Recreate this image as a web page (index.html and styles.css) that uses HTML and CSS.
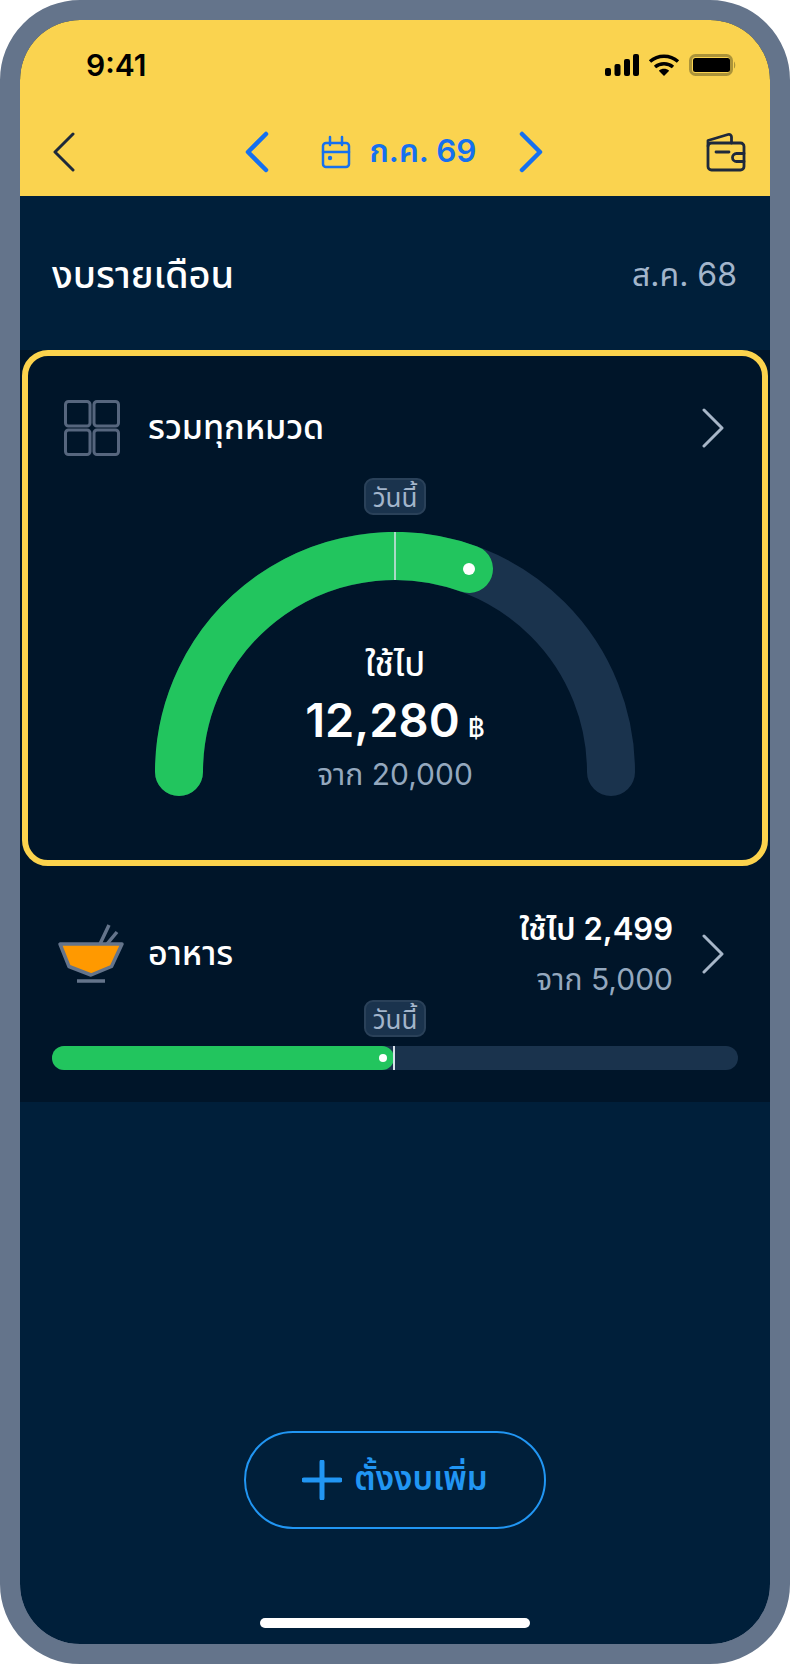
FILE: index.html
```html
<!DOCTYPE html>
<html lang="th">
<head>
<meta charset="utf-8">
<title>งบรายเดือน</title>
<link rel="stylesheet" href="styles.css">
</head>
<body>
<div class="frame">
  <div class="screen">
    <header class="top">
      <div class="status">
        <span class="time">9:41</span>
        <div class="status-icons">
          <svg class="i-signal" viewBox="0 0 34 22"><rect x="0" y="14" width="6" height="8" rx="2"/><rect x="9.5" y="10" width="6" height="12" rx="2"/><rect x="19" y="5" width="6" height="17" rx="2"/><rect x="28" y="0" width="6" height="22" rx="2"/></svg>
          <svg class="i-wifi" viewBox="0 0 32 22"><path class="wf" d="M2 7.500C10 .5 22 .5 30 7.500M7 13C12 8.800 20 8.800 25 13" /><path d="M10.800 16.800C14 14.200 18 14.200 21.200 16.800L16 22Z"/></svg>
          <svg class="i-batt" viewBox="0 0 47 22"><rect class="b-out" x="1.500" y="1.500" width="41" height="19" rx="5"/><rect x="4" y="4" width="37" height="14" rx="2.500"/><path class="b-cap" d="M45 7.500C46.500 8.500 46.800 13.500 45 14.500Z"/></svg>
        </div>
      </div>
      <nav class="nav">
        <svg class="i-back" viewBox="0 0 22 40"><path d="M20 2 2 20l18 18"/></svg>
        <div class="month">
          <svg class="i-step" viewBox="0 0 24 42"><path d="M21 3 3 21l18 18"/></svg>
          <div class="month-label">
            <svg class="i-cal" viewBox="0 0 30 34"><rect x="2" y="8" width="26" height="24" rx="3"/><path d="M2 17h26M9 2v8M21 2v8"/><circle class="cal-dot" cx="9" cy="23" r="2.200"/></svg>
            <span>ก.ค. 69</span>
          </div>
          <svg class="i-step" viewBox="0 0 24 42"><path d="M3 3l18 18L3 39"/></svg>
        </div>
        <svg class="i-wallet" viewBox="0 0 40 40"><rect x="2" y="11" width="36" height="27" rx="3.500"/><path d="M2 14V8.500L22 2.500C24 2 25.500 3 25.500 5V11M10 20h13M38 21.500H30.500a4 4 0 0 0 0 8H38"/></svg>
      </nav>
    </header>

    <div class="page-head">
      <h1 class="page-title">งบรายเดือน</h1>
      <span class="page-period">ส.ค. 68</span>
    </div>

    <div class="panel">
      <section class="card">
        <div class="card-head">
          <svg class="i-grid" viewBox="0 0 56 56"><rect x="1.500" y="1.500" width="24.500" height="24.500" rx="3"/><rect x="30" y="1.500" width="24.500" height="24.500" rx="3"/><rect x="1.500" y="30" width="24.500" height="24.500" rx="3"/><rect x="30" y="30" width="24.500" height="24.500" rx="3"/></svg>
          <h2 class="cat-name">รวมทุกหมวด</h2>
          <svg class="i-next" viewBox="0 0 22 40"><path d="M2 2l18 18L2 38"/></svg>
        </div>
        <div class="today today-gauge">วันนี้</div>
        <div class="gauge">
          <svg class="gauge-svg" viewBox="0 0 480 264">
            <path class="g-track" d="M24 240A216 216 0 0 1 456 240"/>
            <path class="g-fill" d="M24 240A216 216 0 0 1 314 37"/>
            <path class="g-mark" d="M240 0V48"/>
            <circle class="g-dot" cx="314" cy="37" r="6"/>
          </svg>
          <div class="gauge-text">
            <div class="g-label">ใช้ไป</div>
            <div class="g-amount">12,280<span class="g-unit">฿</span></div>
            <div class="g-of">จาก 20,000</div>
          </div>
        </div>
      </section>

      <section class="item">
        <div class="item-row">
          <svg class="i-bowl" viewBox="0 0 72 60">
            <path class="b-sticks" d="M48 20 57 1M55 20 65 8M25 57H53"/>
            <path class="b-bowl" d="M8 20H70L59.500 42.500 39 51 17 42.500Z"/>
          </svg>
          <h2 class="cat-name">อาหาร</h2>
          <div class="item-nums">
            <div class="n-used">ใช้ไป 2,499</div>
            <div class="n-of">จาก 5,000</div>
          </div>
          <svg class="i-next" viewBox="0 0 22 40"><path d="M2 2l18 18L2 38"/></svg>
        </div>
        <div class="bar">
          <div class="today today-bar">วันนี้</div>
          <div class="bar-fill" style="width:49.800%"><span class="bar-dot"></span></div>
          <span class="bar-mark"></span>
        </div>
      </section>
    </div>

    <button class="add" type="button">
      <svg class="i-plus" viewBox="0 0 40 40"><path d="M20 2V38M2 20H38"/></svg>
      <span>ตั้งงบเพิ่ม</span>
    </button>
    <div class="home"></div>
  </div>
</div>
</body>
</html>
```

FILE: styles.css
```css
* { box-sizing: border-box; }
html, body { margin: 0; padding: 0; background: #fff; }
body { font-family: "Inter", "Noto Sans", "Noto Sans Thai", sans-serif; }
svg { display: block; flex: none; }
h1, h2 { margin: 0; font-weight: 500; }

.frame { width: 790px; height: 1664px; border: 20px solid #64748b; border-radius: 80px; overflow: hidden; background: #64748b; }
.screen { width: 750px; height: 1624px; border-radius: 60px; overflow: hidden; background: #001f3a; display: flex; flex-direction: column; }

.top { background: #fad34f; height: 176px; flex: none; }
.status { height: 88px; padding: 2px 34px 0 66px; display: flex; align-items: center; justify-content: space-between; }
.time { font-size: 30px; font-weight: 600; color: #000; }
.status-icons { display: flex; align-items: center; gap: 9px; }
.i-signal { width: 34px; height: 22px; fill: #000; }
.i-wifi { width: 32px; height: 22px; fill: #000; }
.wf { fill: none; stroke: #000; stroke-width: 3.500px; }
.i-batt { width: 47px; height: 22px; fill: #000; }
.b-out { fill: none; stroke: #ab9339; stroke-width: 3px; }
.b-cap { fill: #ab9339; }

.nav { height: 88px; display: flex; align-items: center; justify-content: space-between; padding: 0 24px 0 33px; position: relative; }
.i-back { width: 22px; height: 40px; fill: none; stroke: #1e293b; stroke-width: 3px; stroke-linecap: round; stroke-linejoin: round; }
.month { display: flex; align-items: center; gap: 20px; margin-left: 6px; }
.i-step { width: 24px; height: 42px; fill: none; stroke: #1570ef; stroke-width: 4.500px; stroke-linecap: round; stroke-linejoin: round; }
.month-label { display: flex; align-items: center; gap: 18px; width: 210px; padding-left: 11px; justify-content: center; color: #1570ef; font-size: 31.500px; font-weight: 600; }
.i-cal { width: 30px; height: 34px; fill: none; stroke: #1570ef; stroke-width: 2.500px; stroke-linecap: round; }
.cal-dot { fill: #1570ef; stroke: none; }
.i-wallet { width: 40px; height: 40px; fill: none; stroke: #1e293b; stroke-width: 2.800px; stroke-linecap: round; stroke-linejoin: round; }

.page-head { height: 154px; flex: none; padding: 6px 33px 0 32px; display: flex; align-items: center; justify-content: space-between; }
.page-title { font-size: 38px; font-weight: 500; color: #fff; }
.page-period { font-size: 32px; color: #a3b5cb; }

.panel { background: #001529; flex: none; padding: 0 2px; }
.card { height: 516px; border: 6px solid #fcd34d; border-radius: 26px; display: flex; flex-direction: column; align-items: center; background: #001529; }
.card-head { align-self: stretch; display: flex; align-items: center; padding: 44px 38px 0 36px; }
.i-grid { width: 56px; height: 56px; fill: none; stroke: #56667e; stroke-width: 3px; margin-right: 28px; }
.cat-name { font-size: 34px; font-weight: 500; color: #fff; flex: 1; }
.i-next { width: 22px; height: 40px; fill: none; stroke: #a7b6c8; stroke-width: 3px; stroke-linecap: round; stroke-linejoin: round; }

.today { width: 62px; height: 37px; border: 2px solid #2a4159; border-radius: 9px; background: #1a334d; color: #a3b5cb; font-size: 26px; line-height: 35px; text-align: center; }
.today-gauge { margin: 22px 0 17px; }

.gauge { position: relative; width: 480px; height: 264px; }
.gauge-svg { width: 480px; height: 264px; fill: none; }
.g-track, .g-fill { stroke-width: 48px; stroke-linecap: round; }
.g-track { stroke: #1a334d; }
.g-fill { stroke: #22c55e; }
.g-mark { stroke: #d8e1ea; stroke-width: 1.500px; }
.g-dot { fill: #fff; }
.gauge-text { position: absolute; left: 0; right: 0; top: 104px; text-align: center; color: #fff; }
.g-label { font-size: 34px; font-weight: 500; line-height: 56px; }
.g-amount { font-size: 47px; font-weight: 600; line-height: 56px; }
.g-unit { font-size: 26px; font-weight: 500; margin-left: 8px; }
.g-of { font-size: 30px; line-height: 36px; color: #94a8be; }

.item { height: 236px; margin: 0 -2px; padding: 38px 32px 0; }
.item-row { height: 100px; display: flex; align-items: center; padding-right: 14px; }
.i-bowl { width: 72px; height: 60px; fill: none; margin-right: 24px; }
.b-sticks { stroke: #64748b; stroke-width: 3.500px; }
.b-bowl { fill: #ff9900; stroke: #64748b; stroke-width: 3.500px; stroke-linejoin: round; }
.item-nums { text-align: right; margin-right: 29px; }
.n-used { font-size: 31px; font-weight: 600; line-height: 50px; color: #fff; }
.n-of { font-size: 30px; line-height: 50px; color: #94a8be; }

.bar { position: relative; margin-top: 42px; height: 24px; border-radius: 12px; background: #1a334d; }
.bar-fill { height: 24px; border-radius: 12px; background: #22c55e; position: relative; }
.bar-dot { position: absolute; right: 7px; top: 8px; width: 8px; height: 8px; border-radius: 50%; background: #fff; }
.bar-mark { position: absolute; left: 341px; top: 0; width: 2px; height: 24px; background: #d8e1ea; }
.today-bar { position: absolute; left: 312px; bottom: 33px; }

.add { flex: none; align-self: center; margin: auto 0 89px; width: 302px; height: 98px; border: 2px solid #2196f3; border-radius: 49px; background: transparent; color: #2196f3; font-family: inherit; font-size: 33px; font-weight: 600; display: flex; align-items: center; justify-content: center; gap: 12px; padding: 0; }
.i-plus { width: 40px; height: 40px; fill: none; stroke: #2196f3; stroke-width: 5px; stroke-linecap: round; }
.home { flex: none; align-self: center; width: 270px; height: 10px; border-radius: 5px; background: #fff; margin-bottom: 16px; }
```
